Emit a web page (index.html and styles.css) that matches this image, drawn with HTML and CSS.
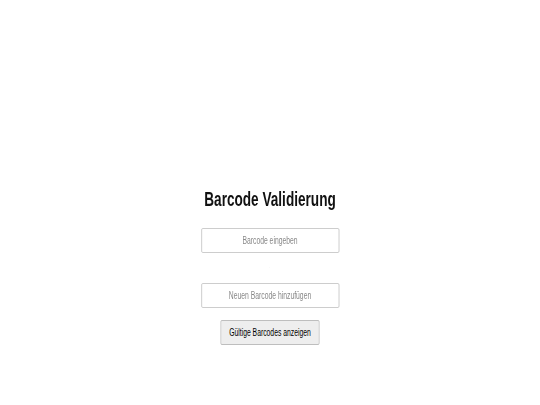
FILE: index.html
```html
<!DOCTYPE html>
<html lang="de">
<head>
<meta charset="utf-8">
<title>Barcode Validierung</title>
<link rel="stylesheet" href="styles.css">
</head>
<body>
<main class="app">
  <h1 class="title">Barcode Validierung</h1>
  <input class="field" type="text" placeholder="Barcode eingeben">
  <p class="message">.</p>
  <input class="field" type="text" placeholder="Neuen Barcode hinzufügen">
  <button class="btn" type="button">Gültige Barcodes anzeigen</button>
</main>
</body>
</html>
```
FILE: styles.css
```css
html, body {
  margin: 0;
  padding: 0;
  background: #fff;
}
body {
  font-family: "Liberation Sans", Arial, sans-serif;
}
.app {
  display: flex;
  flex-direction: column;
  align-items: center;
  padding-top: 188px;
  transform: scaleX(0.68);
  transform-origin: 50% 0;
}
.title {
  margin: 0;
  font-size: 20px;
  font-weight: bold;
  color: #111;
  line-height: 22px;
}
.field {
  box-sizing: border-box;
  width: 203px;
  height: 25px;
  margin-top: 18px;
  border-style: solid;
  border-color: #c4c4c4;
  border-width: 1px 1.5px;
  border-radius: 2px;
  text-align: center;
  font-family: inherit;
  font-size: 10px;
  color: #333;
  background: #fff;
  padding: 0 4px;
}
.field::placeholder {
  color: #888;
}
.message {
  margin: 8px 0 0;
  font-size: 4px;
  line-height: 12px;
  color: #ddd;
}
.field + .message + .field {
  margin-top: 10px;
}
.btn {
  box-sizing: border-box;
  width: 146px;
  height: 25px;
  margin-top: 12px;
  border-style: solid;
  border-color: #b4b4b4;
  border-width: 1px 1.5px;
  border-radius: 2px;
  background: #eeeeee;
  font-family: inherit;
  font-size: 10px;
  color: #000;
  padding: 0;
}
```
